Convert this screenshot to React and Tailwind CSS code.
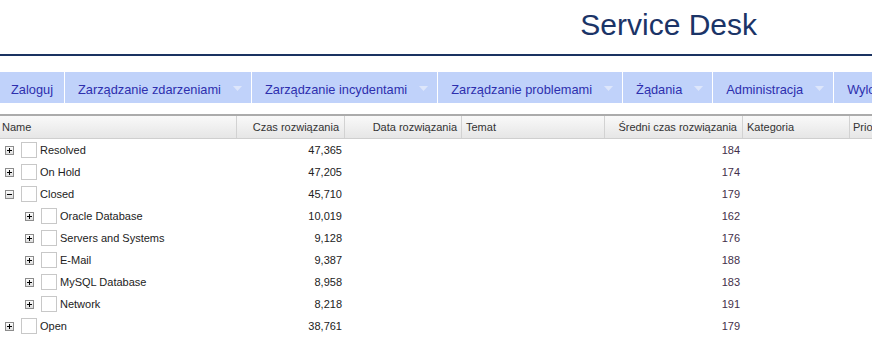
import React from "react";

const menu = [
  { label: "Zaloguj", arrow: false },
  { label: "Zarządzanie zdarzeniami", arrow: true },
  { label: "Zarządzanie incydentami", arrow: true },
  { label: "Zarządzanie problemami", arrow: true },
  { label: "Żądania", arrow: true },
  { label: "Administracja", arrow: true },
  { label: "Wyloguj", arrow: false },
];

const rows = [
  { name: "Resolved", level: 0, open: false, time: "47,365", avg: "184" },
  { name: "On Hold", level: 0, open: false, time: "47,205", avg: "174" },
  { name: "Closed", level: 0, open: true, time: "45,710", avg: "179" },
  { name: "Oracle Database", level: 1, open: false, time: "10,019", avg: "162" },
  { name: "Servers and Systems", level: 1, open: false, time: "9,128", avg: "176" },
  { name: "E-Mail", level: 1, open: false, time: "9,387", avg: "188" },
  { name: "MySQL Database", level: 1, open: false, time: "8,958", avg: "183" },
  { name: "Network", level: 1, open: false, time: "8,218", avg: "191" },
  { name: "Open", level: 0, open: false, time: "38,761", avg: "179" },
];

const Arrow = () => (
  <svg width="9" height="5" viewBox="0 0 9 5" className="ml-[12px] mt-[-3px] shrink-0">
    <polygon points="0,0 9,0 4.5,5" fill="#dde6fb" />
  </svg>
);

const Expander = ({ open }) => (
  <svg width="9" height="9" viewBox="0 0 9 9" className="shrink-0">
    <defs>
      <linearGradient id="exg" x1="0" y1="0" x2="0" y2="1">
        <stop offset="0" stopColor="#ffffff" />
        <stop offset="1" stopColor="#dcdcdc" />
      </linearGradient>
    </defs>
    <rect x="0.5" y="0.5" width="8" height="8" fill="url(#exg)" stroke="#8c8c8c" />
    <rect x="2" y="4" width="5" height="1" fill="#000" />
    {!open && <rect x="4" y="2" width="1" height="5" fill="#000" />}
  </svg>
);

const App = () => {
  return (
    <div className="w-[872px] h-[346px] overflow-hidden bg-white font-['Liberation_Sans',Arial,sans-serif]">
      {/* Naglowek */}
      <div className="h-[54px] flex justify-end pr-[115px] pt-[10px]">
        <h1 className="text-[30px] leading-[30px] text-[#1b3467] whitespace-nowrap">Service Desk</h1>
      </div>
      <div className="h-[2px] bg-[#1a3261]" />

      {/* Menu */}
      <div className="mt-[16px] h-[31px] bg-[#c0d2fa] flex whitespace-nowrap overflow-hidden">
        {menu.map((m, i) => (
          <div
            key={m.label}
            className={`flex items-center h-full pt-[5px] text-[12.8px] text-[#2d2fae] shrink-0 ${
              i === 0 ? "px-[11px]" : "pl-[13px] pr-[9px]"
            } ${i < menu.length - 1 ? "border-r border-white" : ""}`}
          >
            <span>{m.label}</span>
            {m.arrow && <Arrow />}
          </div>
        ))}
      </div>

      {/* Tabela */}
      <div className="mt-[11px] border-t-2 border-[#ababab]">
        <div className="h-[23px] flex text-[11px] text-[#333] bg-gradient-to-b from-[#f9f9f9] to-[#e6e6e6] border-b border-[#cfcfcf] whitespace-nowrap overflow-hidden">
          <div className="w-[237px] shrink-0 border-r border-[#d2d2d2] flex items-center pl-[2px]">Name</div>
          <div className="w-[108px] shrink-0 border-r border-[#d2d2d2] flex items-center justify-end pr-[5px]">Czas rozwiązania</div>
          <div className="w-[117px] shrink-0 border-r border-[#d2d2d2] flex items-center justify-end pr-[4px]">Data rozwiązania</div>
          <div className="w-[143px] shrink-0 border-r border-[#d2d2d2] flex items-center pl-[4px]">Temat</div>
          <div className="w-[138px] shrink-0 border-r border-[#d2d2d2] flex items-center justify-end pr-[5px]">Średni czas rozwiązania</div>
          <div className="w-[107px] shrink-0 border-r border-[#d2d2d2] flex items-center pl-[4px]">Kategoria</div>
          <div className="flex-1 flex items-center pl-[3px]">Priorytet</div>
        </div>

        {rows.map((r) => (
          <div key={r.name} className="h-[22px] flex text-[11px] text-[#222] whitespace-nowrap">
            <div className={`w-[237px] shrink-0 flex items-center ${r.level === 1 ? "pl-[25px]" : "pl-[5px]"}`}>
              <Expander open={r.open} />
              <span className="ml-[7px] w-[16px] h-[16px] border border-[#c8c8c8] bg-white shrink-0" />
              <span className="ml-[3px]">{r.name}</span>
            </div>
            <div className="w-[108px] shrink-0 flex items-center justify-end pr-[3px]">{r.time}</div>
            <div className="w-[117px] shrink-0" />
            <div className="w-[143px] shrink-0" />
            <div className="w-[138px] shrink-0 flex items-center justify-end pr-[3px] text-[#43304a]">{r.avg}</div>
            <div className="w-[107px] shrink-0" />
            <div className="flex-1" />
          </div>
        ))}
      </div>
    </div>
  );
};

export default App;
